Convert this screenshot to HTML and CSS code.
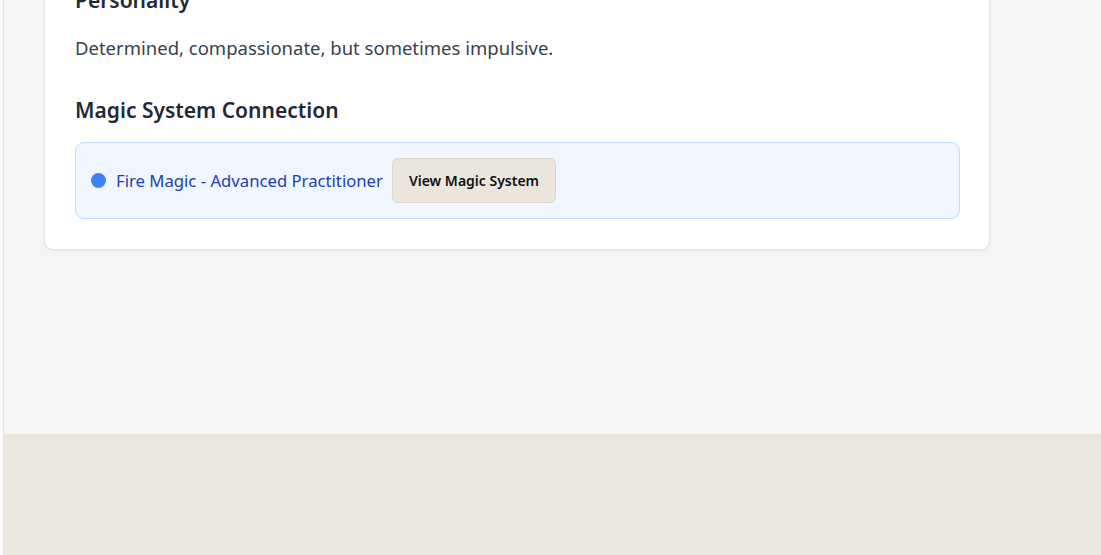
FILE: index.html
```html
<!DOCTYPE html>
<html lang="en">
<head>
<meta charset="utf-8">
<title>Character</title>
<link rel="stylesheet" href="styles.css">
</head>
<body>
<div class="layout">
  <aside class="rail"></aside>
  <div class="column">
    <main class="main">
      <section class="card">
        <h3 class="section-title">Personality</h3>
        <p class="section-text">Determined, compassionate, but sometimes impulsive.</p>
        <h3 class="section-title magic-title">Magic System Connection</h3>
        <div class="magic-box">
          <span class="magic-dot"></span>
          <span class="magic-label">Fire Magic - Advanced Practitioner</span>
          <button class="magic-button" type="button">View Magic System</button>
        </div>
      </section>
    </main>
    <footer class="footer"></footer>
  </div>
</div>
</body>
</html>
```

FILE: styles.css
```css
html, body {
  margin: 0;
  padding: 0;
  height: 100%;
  overflow: hidden;
}

body {
  font-family: "Noto Sans", "Open Sans", sans-serif;
  background: #ece7dd;
  color: #1f2937;
}

.layout {
  display: flex;
  min-height: 100vh;
}

.rail {
  width: 3px;
  flex: none;
  background: #fbfbfa;
  border-right: 1px solid #e3e3e0;
}

.column {
  flex: 1;
  display: flex;
  flex-direction: column;
}

.main {
  background: #f5f5f3;
  padding: 0 111px 184px 40px;
}

.card {
  width: 885px;
  margin-top: -45px;
  padding: 30px 29px 30px 30px;
  background: #ffffff;
  border: 1px solid #e6e6e4;
  border-radius: 9px;
  box-shadow: 0 1px 3px rgba(0, 0, 0, 0.05);
}

.section-title {
  margin: 0 0 20px;
  font-size: 21px;
  line-height: 28px;
  font-weight: 600;
  color: #1f2937;
}

.section-text {
  margin: 0 0 34px;
  font-size: 18.5px;
  line-height: 28px;
  color: #374151;
}

.magic-title {
  margin-bottom: 18px;
}

.magic-box {
  display: flex;
  align-items: center;
  padding: 15px 15px;
  background: #eff6ff;
  border: 1px solid #bfdbfe;
  border-radius: 9px;
}

.magic-dot {
  width: 15px;
  height: 15px;
  border-radius: 50%;
  background: #3b82f6;
  flex: none;
  margin-right: 10px;
}

.magic-label {
  font-size: 16.7px;
  color: #1e40af;
  margin-right: 9px;
}

.magic-button {
  font-family: inherit;
  font-size: 14px;
  font-weight: 600;
  color: #111111;
  background: #ebe6dc;
  border: 1px solid #dcd6cb;
  border-radius: 6px;
  height: 45px;
  padding: 0 16px;
  cursor: pointer;
}
```
